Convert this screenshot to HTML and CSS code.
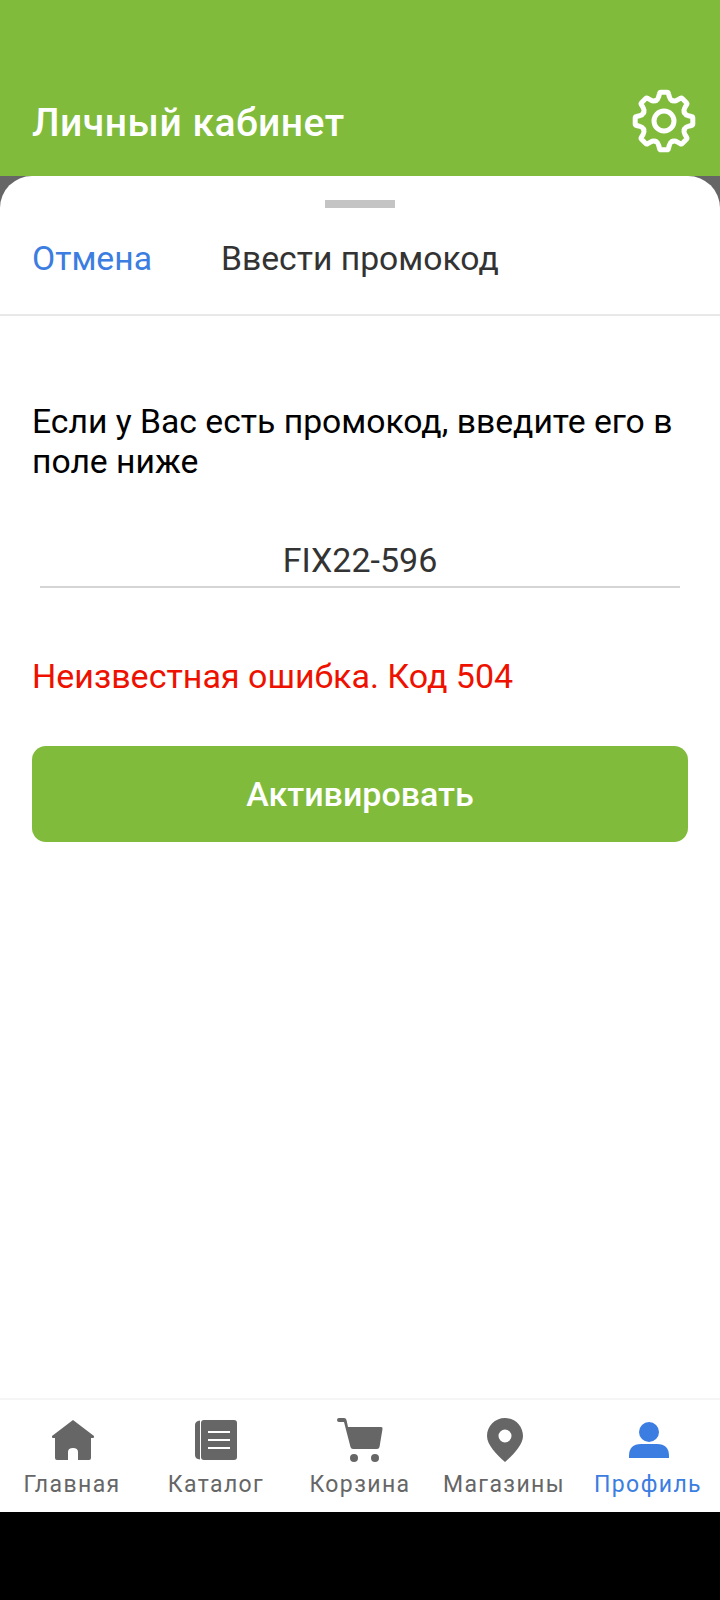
FILE: index.html
```html
<!DOCTYPE html>
<html lang="ru">
    <head>
        <meta charset="UTF-8">
        <meta name="viewport" content="width=device-width, initial-scale=1.0">
        <link rel="stylesheet" href="styles.css">
    </head>
    <body>
        <div class="app">
            <header class="topBar">
                <h1 class="topTitle">Личный кабинет</h1>
                <svg class="gear" viewBox="0 0 64 64" width="64" height="64">
                    <defs>
                        <path id="gearTooth" d="M23.6 11.7Q26 10.5 26.6 8L27.5 4.6Q27.8 3.2 29 3.2H35Q36.2 3.2 36.5 4.6L37.4 8Q38 10.5 40.4 11.7"/>
                    </defs>
                    <g fill="none" stroke="#fff" stroke-width="5" stroke-linecap="round" stroke-linejoin="round">
                        <use href="#gearTooth"/>
                        <use href="#gearTooth" transform="rotate(45 32 32)"/>
                        <use href="#gearTooth" transform="rotate(90 32 32)"/>
                        <use href="#gearTooth" transform="rotate(135 32 32)"/>
                        <use href="#gearTooth" transform="rotate(180 32 32)"/>
                        <use href="#gearTooth" transform="rotate(225 32 32)"/>
                        <use href="#gearTooth" transform="rotate(270 32 32)"/>
                        <use href="#gearTooth" transform="rotate(315 32 32)"/>
                        <circle cx="32" cy="32" r="10"/>
                    </g>
                </svg>
            </header>

            <div class="sheetBack">
                <main class="sheet">
                    <div class="handle"></div>
                    <div class="sheetHead">
                        <span class="cancel">Отмена</span>
                        <span class="sheetTitle">Ввести промокод</span>
                    </div>
                    <div class="sheetBody">
                        <p class="hint">Если у Вас есть промокод, введите его в поле ниже</p>
                        <div class="codeField">FIX22-596</div>
                        <p class="errorText">Неизвестная ошибка. Код 504</p>
                        <button class="activate">Активировать</button>
                    </div>
                </main>
            </div>

            <nav class="tabs">
                <div class="tab">
                    <svg class="tabIcon" viewBox="0 0 48 48" width="48" height="48">
                        <path fill="#666" d="M25 4L46 20Q46.500 22 45 22H43V42Q43 44 41 44H30V36Q30 32 25 32Q20 32 20 36V44H9Q7 44 7 42V22H5Q3.500 22 4 20Z"/>
                    </svg>
                    <span>Главная</span>
                </div>
                <div class="tab">
                    <svg class="tabIcon" viewBox="0 0 48 48" width="48" height="48">
                        <path fill="#666" d="M8 4.500V43.500Q3 43 3 39V9Q3 5 8 4.500Z"/>
                        <rect x="9" y="4" width="36" height="40" rx="3" fill="#666"/>
                        <path stroke="#fff" stroke-width="2" d="M16 16H38M16 24H38M16 32H38"/>
                    </svg>
                    <span>Каталог</span>
                </div>
                <div class="tab">
                    <svg class="tabIcon" viewBox="0 0 48 48" width="48" height="48">
                        <path fill="#666" d="M3 2H8Q10 2 10.500 4L12 11H45Q47 11 46.500 13L43.500 31Q43 33 41 33H17Q15 33 14.500 31L8 6H3Q1 6 1 4Q1 2 3 2Z"/>
                        <circle cx="18" cy="42" r="4" fill="#666"/>
                        <circle cx="39" cy="42" r="4" fill="#666"/>
                    </svg>
                    <span>Корзина</span>
                </div>
                <div class="tab">
                    <svg class="tabIcon" viewBox="0 0 48 48" width="48" height="48">
                        <path fill="#666" fill-rule="evenodd" d="M25 2C35 2 43 10 43 20C43 29 33 39 25 46C17 39 7 29 7 20C7 10 15 2 25 2ZM25 13.500A6.500 6.500 0 1 0 25 26.500A6.500 6.500 0 1 0 25 13.500Z"/>
                    </svg>
                    <span>Магазины</span>
                </div>
                <div class="tab tabActive">
                    <svg class="tabIcon" viewBox="0 0 48 48" width="48" height="48">
                        <circle cx="25" cy="16" r="10" fill="#3b7de1"/>
                        <path fill="#3b7de1" d="M5 42V40Q5 28 17 28H33Q45 28 45 40V42Z"/>
                    </svg>
                    <span>Профиль</span>
                </div>
            </nav>

            <div class="blackBar"></div>
        </div>
    </body>
</html>
```

FILE: styles.css
```css
* {
    box-sizing: border-box;
}

body {
    margin: 0;
    font-family: Roboto, "Noto Sans", sans-serif;
}

.app {
    display: flex;
    flex-direction: column;
    width: 720px;
    height: 1600px;
    background-color: white;
}

.topBar {
    display: flex;
    align-items: center;
    justify-content: space-between;
    height: 176px;
    padding: 72px 24px 0 32px;
    background-color: #80bb3c;
    color: white;
}

.topTitle {
    margin: 0 0 2px;
    font-size: 39px;
    font-weight: 500;
    letter-spacing: 0.5px;
}

.gear {
    display: block;
    margin-bottom: 7px;
}

.sheetBack {
    flex: 1;
    display: flex;
    background-color: #666;
}

.sheet {
    flex: 1;
    background-color: white;
    border-radius: 32px 32px 0 0;
    padding-top: 24px;
}

.handle {
    width: 70px;
    height: 8px;
    margin: 0 auto;
    background-color: #c4c4c4;
}

.sheetHead {
    display: flex;
    align-items: center;
    gap: 69px;
    height: 108px;
    padding: 0 32px 6px;
    border-bottom: 2px solid #e8e8e8;
    font-size: 33.7px;
}

.cancel {
    color: #3b7de1;
}

.sheetTitle {
    color: #333;
}

.sheetBody {
    padding: 86px 32px 0;
}

.hint {
    margin: 0;
    font-size: 33.7px;
    line-height: 40px;
    color: black;
}

.codeField {
    margin: 55px 8px 0;
    height: 51px;
    line-height: 46px;
    border-bottom: 2px solid #d5d5d5;
    font-size: 34px;
    text-align: center;
    color: #333;
}

.errorText {
    margin: 68px 0 0;
    font-size: 34px;
    line-height: 40px;
    color: #ee1100;
}

.activate {
    display: block;
    width: 100%;
    height: 96px;
    margin-top: 50px;
    border: none;
    border-radius: 14px;
    background-color: #80bb3c;
    color: white;
    font-family: inherit;
    font-size: 34px;
    font-weight: 500;
}

.tabs {
    display: flex;
    height: 114px;
    border-top: 2px solid #f5f5f5;
    background-color: white;
}

.tab {
    flex: 1;
    display: flex;
    flex-direction: column;
    align-items: center;
    padding-top: 16px;
    font-size: 23px;
    line-height: 28px;
    letter-spacing: 1.4px;
    color: #666;
    white-space: nowrap;
}

.tabIcon {
    display: block;
    margin-bottom: 7px;
}

.tabActive {
    color: #3b7de1;
}

.blackBar {
    height: 88px;
    background-color: black;
}
```
